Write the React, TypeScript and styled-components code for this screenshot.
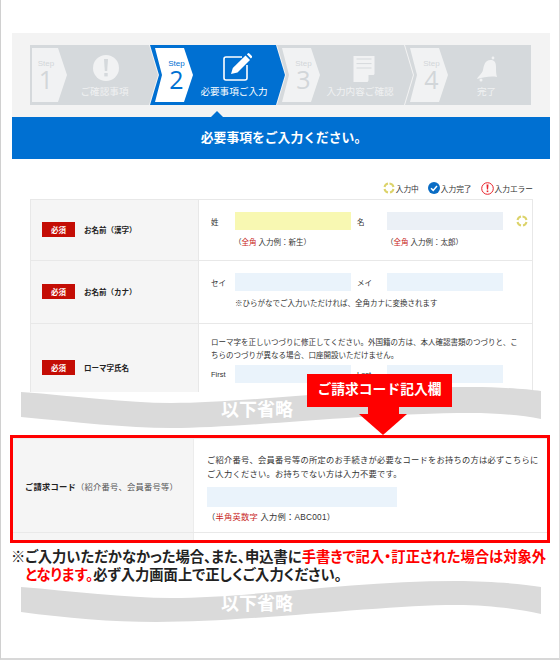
import React from "react";
import styled, { createGlobalStyle } from "styled-components";

const GlobalStyle = createGlobalStyle`
  html, body {
    margin: 0;
    padding: 0;
    background: #fff;
  }
  body {
    font-family: "Liberation Sans", "Noto Sans CJK JP", sans-serif;
    color: #333;
  }
  * { box-sizing: border-box; }
`;

const Page = styled.div`
  position: relative;
  width: 560px;
  height: 660px;
  padding: 33px 9px 0 11px;
  border-left: 1px solid #d0d0d0;
  border-right: 1px solid #dedede;
  border-bottom: 2px solid #d8d8d8;
  overflow: hidden;
  background: #fff;
`;

const StepPanel = styled.div`
  background: #f3f3f3;
  padding: 12px 18px;
  height: 84px;
  display: flex;
`;

const Step = styled.div<{ $first?: boolean; $last?: boolean; $active?: boolean; $w: number }>`
  position: relative;
  display: flex;
  width: ${(p) => p.$w}px;
  height: 60px;
  margin-left: ${(p) => (p.$first ? 0 : -8)}px;
  background: ${(p) => (p.$active ? "#0070d2" : "#d5d9dc")};
  clip-path: ${(p) => {
    const notch = p.$first ? "" : ", 9px 50%";
    const right = p.$last
      ? "100% 0, 100% 100%"
      : "calc(100% - 9px) 0, 100% 50%, calc(100% - 9px) 100%";
    return `polygon(0 0, ${right}, 0 100%${notch})`;
  }};
`;

const Badge = styled.div<{ $first?: boolean; $active?: boolean }>`
  position: absolute;
  top: 3px;
  left: ${(p) => (p.$first ? 2 : 5)}px;
  width: ${(p) => (p.$first ? 35 : 38)}px;
  height: 54px;
  display: flex;
  flex-direction: column;
  align-items: center;
  padding: 11px ${(p) => (p.$first ? 7 : 0)}px 0 ${(p) => (p.$first ? 0 : 5)}px;
  background: ${(p) => (p.$active ? "#fff" : "#f1f2f3")};
  color: ${(p) => (p.$active ? "#0070d2" : "#d2d6d9")};
  clip-path: ${(p) =>
    p.$first
      ? "polygon(0 0, 26px 0, 100% 50%, 26px 100%, 0 100%)"
      : "polygon(0 0, 29px 0, 100% 50%, 29px 100%, 0 100%, 7px 50%)"};
`;

const StepWord = styled.span`
  font-size: 8px;
  line-height: 10px;
`;

const StepNumber = styled.span`
  font-family: "Open Sans", "Liberation Sans", sans-serif;
  font-size: 25px;
  line-height: 21px;
`;

const StepBody = styled.div<{ $pad: number }>`
  display: flex;
  flex-direction: column;
  align-items: center;
  width: 100%;
  padding-left: ${(p) => p.$pad}px;
  padding-top: 8px;
`;

const StepIcon = styled.svg<{ $shift: number }>`
  display: block;
  width: 30px;
  height: 30px;
  margin-left: ${(p) => p.$shift * 2}px;
`;

const StepLabel = styled.span<{ $active?: boolean }>`
  margin-top: 2px;
  font-size: 9.6px;
  line-height: 14px;
  white-space: nowrap;
  color: ${(p) => (p.$active ? "#fff" : "#f0f1f2")};
`;

const TitleBar = styled.div`
  position: relative;
  height: 42px;
  background: #0070d2;
  color: #fff;
  font-size: 12.8px;
  font-weight: 700;
  line-height: 42px;
  text-align: center;
  padding-left: 6px;
  &::before {
    content: "";
    position: absolute;
    top: -6px;
    left: 199px;
    border-left: 6px solid transparent;
    border-right: 6px solid transparent;
    border-bottom: 6px solid #0070d2;
  }
`;

const Legend = styled.div`
  display: flex;
  justify-content: flex-end;
  align-items: center;
  gap: 9px;
  height: 40px;
  padding: 18px 17px 0 0;
  font-size: 7.7px;
`;

const LegendItem = styled.span`
  display: flex;
  align-items: center;
  gap: 1px;
`;

const Table = styled.div`
  margin-left: 18px;
  width: 503px;
  height: 193px;
  overflow: hidden;
  border: 1px solid #e8e8e8;
  border-bottom: 0;
`;

const Row = styled.div<{ $h: number }>`
  display: flex;
  flex: none;
  height: ${(p) => p.$h}px;
  border-bottom: 1px solid #e8e8e8;
  font-size: 7.5px;
`;

const HeadCell = styled.div`
  display: flex;
  align-items: center;
  gap: 9px;
  flex: 0 0 168px;
  padding: 0 0 2px 11px;
  background: #f5f5f5;
  border-right: 1px solid #e8e8e8;
  font-weight: 700;
  color: #222;
`;

const Required = styled.span`
  display: flex;
  align-items: center;
  justify-content: center;
  width: 33px;
  height: 15px;
  background: #c40d05;
  color: #fff;
  font-size: 7.5px;
`;

const BodyCell = styled.div`
  flex: 1;
  padding: 12px 0 0 12px;
`;

const FieldLine = styled.div`
  display: flex;
  align-items: center;
  height: 18px;
`;

const FieldName = styled.span`
  flex: 0 0 24px;
`;

const FieldNameRight = styled.span`
  flex: 0 0 36px;
  padding-left: 6px;
`;

const Input = styled.div<{ $state?: "typing" | "idle" }>`
  width: 116px;
  height: 18px;
  background: ${(p) =>
    p.$state === "typing" ? "#f8f8b2" : p.$state === "idle" ? "#ebf0f6" : "#eaf3fb"};
`;

const Spinner = styled.svg<{ $gap?: number }>`
  flex: none;
  margin-left: ${(p) => p.$gap ?? 0}px;
  width: 12px;
  height: 12px;
`;

const Hints = styled.div`
  display: flex;
  margin-top: 8px;
  line-height: 10px;
`;

const Hint = styled.span`
  flex: 0 0 152px;
  padding-left: 23px;
`;

const Red = styled.span`
  color: #c8261c;
`;

const Note = styled.div`
  margin: 8px 0 0 24px;
  line-height: 10px;
`;

const Paragraph = styled.p`
  margin: 0 0 3px;
  width: 310px;
  line-height: 13px;
`;

const Wave = styled.div<{ $top: number }>`
  position: relative;
  margin-top: ${(p) => p.$top}px;
  margin-left: 9px;
  width: 520px;
  height: 42px;
`;

const WaveShape = styled.svg`
  display: block;
  width: 520px;
  height: 42px;
`;

const WaveText = styled.span`
  position: absolute;
  left: 200px;
  top: 13px;
  color: #fff;
  font-size: 18px;
  font-weight: 700;
  line-height: 20px;
  white-space: nowrap;
`;

const Callout = styled.div`
  position: absolute;
  top: 374px;
  left: 306px;
  width: 145px;
  height: 33px;
  background: #f00;
  color: #fff;
  font-size: 13.8px;
  font-weight: 700;
  line-height: 31px;
  text-align: center;
  white-space: nowrap;
  &::before {
    content: "";
    position: absolute;
    top: 33px;
    left: 61px;
    width: 31px;
    height: 7px;
    background: #f00;
  }
  &::after {
    content: "";
    position: absolute;
    top: 40px;
    left: 52px;
    border-left: 24px solid transparent;
    border-right: 24px solid transparent;
    border-top: 21px solid #f00;
  }
`;

const CodeBox = styled.div`
  position: relative;
  display: flex;
  margin: 6px 0 0 -2px;
  width: 540px;
  height: 108px;
  border: 3px solid #f00;
  font-size: 8.25px;
  letter-spacing: 0.25px;
  &::after {
    content: "";
    position: absolute;
    left: 0;
    right: 0;
    bottom: 7px;
    height: 1px;
    background: #e9e9e9;
  }
`;

const CodeHead = styled.div`
  flex: 0 0 181px;
  display: flex;
  align-items: center;
  padding: 0 0 7px 12px;
  background: #f5f5f5;
  border-top: 1px solid #ececec;
  border-right: 1px solid #ececec;
  font-weight: 700;
  color: #222;
  white-space: nowrap;
  span {
    font-weight: 400;
    color: #555;
  }
`;

const CodeBody = styled.div`
  flex: 1;
  padding: 15px 6px 0 13px;
  border-top: 1px solid #ececec;
  line-height: 14px;
`;

const CodeInput = styled.div`
  width: 190px;
  height: 20px;
  margin: 5px 0 4px;
  background: #eaf3fb;
`;

const Footnote = styled.div`
  margin: 6px 0 0 -1px;
  padding-left: 14px;
  text-indent: -14px;
  width: 542px;
  font-size: 14.3px;
  font-weight: 700;
  line-height: 17.5px;
  font-feature-settings: "palt";
  color: #222;
  em {
    font-style: normal;
    color: #f00;
  }
`;

const Ring = ({ gap }: { gap?: number }) => (
  <Spinner $gap={gap} viewBox="0 0 24 24">
    <g fill="none" stroke="#dcd36a" strokeWidth="4">
      <path d="M13 3a9 9 0 0 1 8 7" />
      <path d="M21 14a9 9 0 0 1-7 7" />
      <path d="M10 21a9 9 0 0 1-7-7" />
      <path d="M3 10a9 9 0 0 1 7-7" />
    </g>
  </Spinner>
);

const waveA =
  "M0 5C55 9 105 16 150 16C225 16 345 0 450 0C480 0 505 2 520 4L520 32C500 28 475 26 450 26C345 26 225 41 150 41C105 41 55 35 0 30Z";
const waveB =
  "M0 6C50 10 105 17 150 17C230 17 330 0 435 0C470 0 500 3 520 6L520 33C495 28 470 24 435 24C360 24 230 41 135 41C90 41 45 37 0 31Z";

export default function App() {
  return (
    <Page>
      <GlobalStyle />
      <StepPanel>
        <Step $first $w={128}>
          <Badge $first>
            <StepWord>Step</StepWord>
            <StepNumber>1</StepNumber>
          </Badge>
          <StepBody $pad={21}>
            <StepIcon $shift={1.5} viewBox="0 0 30 30">
              <circle cx="15" cy="15" r="13" fill="#f1f2f3" />
              <path d="M13 6h4l-.8 12h-2.400z" fill="#d5d9dc" />
              <rect x="13.300" y="20" width="3.400" height="3.400" fill="#d5d9dc" />
            </StepIcon>
            <StepLabel>ご確認事項</StepLabel>
          </StepBody>
        </Step>
        <Step $active $w={135}>
          <Badge $active>
            <StepWord>Step</StepWord>
            <StepNumber>2</StepNumber>
          </Badge>
          <StepBody $pad={33}>
            <StepIcon $shift={3} viewBox="0 0 30 30">
              <path d="M20 4H4a2 2 0 0 0-2 2v19a2 2 0 0 0 2 2h19a2 2 0 0 0 2-2V12" fill="none" stroke="#fff" strokeWidth="1.600" />
              <path d="M9 21l1.800-6L23.500 2.500 28 7 15.500 19.500z" fill="#fff" />
              <path d="M24.800 1.200l1-.8a1.200 1.200 0 0 1 1.600 0l2.500 2.500a1.200 1.200 0 0 1 0 1.600l-1 1z" fill="#fff" />
            </StepIcon>
            <StepLabel $active>必要事項ご入力</StepLabel>
          </StepBody>
        </Step>
        <Step $w={136}>
          <Badge>
            <StepWord>Step</StepWord>
            <StepNumber>3</StepNumber>
          </Badge>
          <StepBody $pad={30}>
            <StepIcon $shift={3.5} viewBox="0 0 30 30">
              <path d="M4.500 3h21v18l-7 8h-14z" fill="#f1f2f3" />
              <path d="M7.500 6h15M7.500 10.600h15M7.500 15h15" stroke="#d5d9dc" strokeWidth="1" />
              <path d="M19.500 22h6l-6 6.500z" fill="#d5d9dc" />
            </StepIcon>
            <StepLabel>入力内容ご確認</StepLabel>
          </StepBody>
        </Step>
        <Step $last $w={126}>
          <Badge>
            <StepWord>Step</StepWord>
            <StepNumber>4</StepNumber>
          </Badge>
          <StepBody $pad={37}>
            <StepIcon $shift={0} viewBox="0 0 30 30">
              <circle cx="21" cy="5" r="1.400" fill="#f1f2f3" />
              <path d="M20 7c3 1 4 3 4 7 0 4 0 7 1 10-6-1-13 0-20 2 1-3 5-5 6-9 1-5 2-11 9-10z" fill="#f1f2f3" />
              <circle cx="9" cy="27" r="1.500" fill="#f1f2f3" />
            </StepIcon>
            <StepLabel>完了</StepLabel>
          </StepBody>
        </Step>
      </StepPanel>
      <TitleBar>必要事項をご入力ください。</TitleBar>

      <Legend>
        <LegendItem>
          <Ring />
          入力中
        </LegendItem>
        <LegendItem>
          <svg width="12" height="12" viewBox="0 0 12 12">
            <circle cx="6" cy="6" r="6" fill="#0a6cc4" />
            <path d="M3 6.200l2.200 2.200L9 4" fill="none" stroke="#fff" strokeWidth="1.500" />
          </svg>
          入力完了
        </LegendItem>
        <LegendItem>
          <svg width="13" height="13" viewBox="0 0 13 13">
            <circle cx="6.500" cy="6.500" r="5.800" fill="#fff" stroke="#e8222a" strokeWidth="1" />
            <path d="M5.500 2.500h2l-.4 5h-1.200z" fill="#e8222a" />
            <rect x="5.700" y="8.500" width="1.600" height="1.600" fill="#e8222a" />
          </svg>
          入力エラー
        </LegendItem>
      </Legend>

      <Table>
        <Row $h={61}>
          <HeadCell>
            <Required>必須</Required>
            お名前（漢字）
          </HeadCell>
          <BodyCell>
            <FieldLine>
              <FieldName>姓</FieldName>
              <Input $state="typing" />
              <FieldNameRight>名</FieldNameRight>
              <Input $state="idle" />
              <Ring gap={13} />
            </FieldLine>
            <Hints>
              <Hint>
                （<Red>全角</Red> 入力例：新生）
              </Hint>
              <Hint>
                （<Red>全角</Red> 入力例：太郎）
              </Hint>
            </Hints>
          </BodyCell>
        </Row>
        <Row $h={63}>
          <HeadCell>
            <Required>必須</Required>
            お名前（カナ）
          </HeadCell>
          <BodyCell>
            <FieldLine>
              <FieldName>セイ</FieldName>
              <Input />
              <FieldNameRight>メイ</FieldNameRight>
              <Input />
            </FieldLine>
            <Note>※ひらがなでご入力いただければ、全角カナに変換されます</Note>
          </BodyCell>
        </Row>
        <Row $h={90}>
          <HeadCell>
            <Required>必須</Required>
            ローマ字氏名
          </HeadCell>
          <BodyCell>
            <Paragraph>
              ローマ字を正しいつづりに修正してください。外国籍の方は、本人確認書類のつづりと、こちらのつづりが異なる場合、口座開設いただけません。
            </Paragraph>
            <FieldLine>
              <FieldName>First</FieldName>
              <Input />
              <FieldNameRight>Last</FieldNameRight>
              <Input />
            </FieldLine>
          </BodyCell>
        </Row>
      </Table>

      <Wave $top={-5}>
        <WaveShape viewBox="0 0 520 42">
          <path d={waveA} fill="#dadada" />
        </WaveShape>
        <WaveText>以下省略</WaveText>
      </Wave>

      <CodeBox>
        <CodeHead>
          ご請求コード<span>（紹介番号、会員番号等）</span>
        </CodeHead>
        <CodeBody>
          ご紹介番号、会員番号等の所定のお手続きが必要なコードをお持ちの方は必ずこちらにご入力ください。お持ちでない方は入力不要です。
          <CodeInput />
          （<Red>半角英数字</Red> 入力例：ABC001）
        </CodeBody>
      </CodeBox>

      <Footnote>
        ※ご入力いただかなかった場合、また、申込書に<em>手書きで記入・訂正された場合は対象外となります。</em>必ず入力画面上で正しくご入力ください。
      </Footnote>

      <Wave $top={-3}>
        <WaveShape viewBox="0 0 520 42">
          <path d={waveB} fill="#dadada" />
        </WaveShape>
        <WaveText>以下省略</WaveText>
      </Wave>

      <Callout>ご請求コード記入欄</Callout>
    </Page>
  );
}
